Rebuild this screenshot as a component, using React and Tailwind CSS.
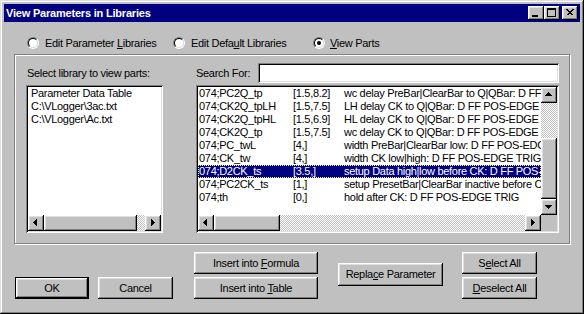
import React from "react";

const raised =
  "shadow-[inset_-1px_-1px_0_#000,inset_1px_1px_0_#fff,inset_-2px_-2px_0_#808080,inset_2px_2px_0_#dfdfdf]";
const sunken =
  "shadow-[inset_1px_1px_0_#808080,inset_-1px_-1px_0_#fff,inset_2px_2px_0_#000,inset_-2px_-2px_0_#dfdfdf]";
const dither =
  "bg-[repeating-conic-gradient(#fff_0_25%,#c0c0c0_0_50%)] bg-[length:2px_2px]";

const parts = [
  ["074;PC2Q_tp", "[1.5,8.2]", "wc delay PreBar|ClearBar to Q|QBar: D FF POS-EDGE TRIG"],
  ["074;CK2Q_tpLH", "[1.5,7.5]", "LH delay CK to Q|QBar: D FF POS-EDGE TRIG"],
  ["074;CK2Q_tpHL", "[1.5,6.9]", "HL delay CK to Q|QBar: D FF POS-EDGE TRIG"],
  ["074;CK2Q_tp", "[1.5,7.5]", "wc delay CK to Q|QBar: D FF POS-EDGE TRIG"],
  ["074;PC_twL", "[4,]", "width PreBar|ClearBar low: D FF POS-EDGE TRIG"],
  ["074;CK_tw", "[4,]", "width CK low|high: D FF POS-EDGE TRIG"],
  ["074;D2CK_ts", "[3.5,]", "setup Data high|low before CK: D FF POS-EDGE TRIG"],
  ["074;PC2CK_ts", "[1,]", "setup PresetBar|ClearBar inactive before CK: D FF POS-EDGE TRIG"],
  ["074;th", "[0,]", "hold after CK: D FF POS-EDGE TRIG"],
];

const libraries = ["Parameter Data Table", "C:\\VLogger\\3ac.txt", "C:\\VLogger\\Ac.txt"];

// little black triangle inside a 16x16 scroll button
function Arrow({ dir }) {
  const sizes = [1, 3, 5, 7];
  let rects = [];
  if (dir === "left") rects = sizes.map((h, i) => [5 + i, 7 - (h - 1) / 2, 1, h]);
  if (dir === "right") rects = [7, 5, 3, 1].map((h, i) => [6 + i, 7 - (h - 1) / 2, 1, h]);
  if (dir === "up") rects = sizes.map((w, i) => [7 - (w - 1) / 2, 5 + i, w, 1]);
  if (dir === "down") rects = [7, 5, 3, 1].map((w, i) => [7 - (w - 1) / 2, 6 + i, w, 1]);
  return (
    <div className={`w-[16px] h-[16px] shrink-0 bg-[#c0c0c0] ${raised}`}>
      <svg width="16" height="16" shapeRendering="crispEdges">
        {rects.map(([x, y, w, h], i) => (
          <rect key={i} x={x} y={y} width={w} height={h} fill="#000" />
        ))}
      </svg>
    </div>
  );
}

function Radio({ checked }) {
  return (
    <div className="w-[12px] h-[12px] rounded-full border border-t-[#808080] border-l-[#808080] border-b-white border-r-white shrink-0">
      <div className="w-full h-full rounded-full border border-t-black border-l-black border-b-[#dfdfdf] border-r-[#dfdfdf] bg-white flex items-center justify-center">
        {checked && <div className="w-[4px] h-[4px] rounded-full bg-black" />}
      </div>
    </div>
  );
}

function Button({ children, className = "", isDefault = false }) {
  return (
    <div
      className={`flex items-center justify-center bg-[#c0c0c0] text-black ${
        isDefault ? "border border-black" : ""
      } ${className}`}
    >
      <div className={`w-full h-full flex items-center justify-center ${raised}`}>{children}</div>
    </div>
  );
}

function TitleButton({ children, className = "" }) {
  return (
    <div className={`w-[16px] h-[14px] bg-[#c0c0c0] ${raised} ${className}`}>
      <svg width="16" height="14" shapeRendering="crispEdges">
        {children}
      </svg>
    </div>
  );
}

export default function App() {
  return (
    <div className="w-[584px] h-[314px] bg-[#c0c0c0] p-[4px] flex flex-col font-['Liberation_Sans',Arial,sans-serif] text-[11px] tracking-[-0.3px] text-black leading-none shadow-[inset_-1px_-1px_0_#000,inset_1px_1px_0_#dfdfdf,inset_-2px_-2px_0_#808080,inset_2px_2px_0_#fff] overflow-hidden">
      {/* title bar */}
      <div className="h-[18px] bg-[#000080] flex items-center pl-[2px] pr-[2px]">
        <span className="text-white font-bold text-[11px] tracking-[-0.2px]">View Parameters in Libraries</span>
        <div className="ml-auto flex items-center">
          <TitleButton>
            <rect x="4" y="9" width="6" height="2" fill="#000" />
          </TitleButton>
          <TitleButton>
            <rect x="3" y="2" width="9" height="2" fill="#000" />
            <rect x="3" y="4" width="1" height="7" fill="#000" />
            <rect x="11" y="4" width="1" height="7" fill="#000" />
            <rect x="3" y="10" width="9" height="1" fill="#000" />
          </TitleButton>
          <TitleButton className="ml-[2px]">
            <path d="M4.5 3.5 L10.5 9.5 M5.5 3.5 L11.5 9.5 M10.5 3.5 L4.5 9.5 M11.5 3.5 L5.5 9.5" stroke="#000" strokeWidth="1" />
          </TitleButton>
        </div>
      </div>

      {/* radio row */}
      <div className="mt-[14px] h-[14px] flex items-center pl-[23px]">
        <div className="w-[146px] flex items-center gap-[6px]">
          <Radio />
          <span>
            Edit Parameter <u>L</u>ibraries
          </span>
        </div>
        <div className="w-[140px] flex items-center gap-[6px]">
          <Radio />
          <span>
            Edit Defa<u>u</u>lt Libraries
          </span>
        </div>
        <div className="flex items-center gap-[5px]">
          <Radio checked />
          <span>
            <u>V</u>iew Parts
          </span>
        </div>
      </div>

      {/* group box */}
      <div className="mt-[4px] ml-[10px] w-[556px] h-[190px] shrink-0 border border-[#808080] shadow-[1px_1px_0_#fff,inset_1px_1px_0_#fff] pl-[11px] pt-[8px] flex gap-[33px]">
        <div className="w-[137px] flex flex-col">
          <div className="h-[20px] flex items-center pl-[1px]">Select library to view parts:</div>
          <div className={`mt-[2px] h-[148px] bg-white p-[2px] flex flex-col ${sunken}`}>
            <div className="flex-1 pl-[3px] pt-0">
              {libraries.map((l) => (
                <div key={l} className="h-[13px] flex items-center whitespace-nowrap">
                  {l}
                </div>
              ))}
            </div>
            <div className="h-[16px] flex">
              <Arrow dir="left" />
              <div className={`w-[93px] h-[16px] bg-[#c0c0c0] ${raised}`} />
              <div className={`flex-1 ${dither}`} />
              <Arrow dir="right" />
            </div>
          </div>
        </div>

        <div className="w-[363px] flex flex-col">
          <div className="h-[20px] flex items-center">
            <span className="w-[62px]">Search For:</span>
            <div className={`flex-1 h-[20px] bg-white ${sunken}`} />
          </div>
          <div className={`mt-[2px] h-[148px] bg-white p-[2px] flex flex-col ${sunken}`}>
            <div className="flex-1 flex min-h-0">
              <div className="flex-1 overflow-hidden">
                {parts.map(([name, range, desc], i) => {
                  const sel = i === 6;
                  return (
                    <div
                      key={name}
                      className={`h-[13px] flex items-center whitespace-nowrap pl-[1px] ${
                        sel ? "bg-[#000080] text-white outline-1 outline-dotted outline-offset-[-1px] outline-[#ffff80]" : ""
                      }`}
                    >
                      <span className="w-[94px] shrink-0">{name}</span>
                      <span className="w-[51px] shrink-0">{range}</span>
                      <span className="shrink-0">{desc}</span>
                    </div>
                  );
                })}
              </div>
              <div className="w-[16px] flex flex-col">
                <Arrow dir="up" />
                <div className={`h-[35px] ${dither}`} />
                <div className={`h-[61px] bg-[#c0c0c0] ${raised}`} />
                <Arrow dir="down" />
              </div>
            </div>
            <div className="h-[16px] flex">
              <Arrow dir="left" />
              <div className={`w-[66px] h-[16px] bg-[#c0c0c0] ${raised}`} />
              <div className={`flex-1 ${dither}`} />
              <Arrow dir="right" />
              <div className="w-[16px] bg-[#c0c0c0]" />
            </div>
          </div>
        </div>
      </div>

      {/* bottom buttons */}
      <div className="mt-[8px] flex items-start pl-[11px]">
        <Button isDefault className="mt-[25px] w-[74px] h-[22px]">
          OK
        </Button>
        <Button className="mt-[25px] ml-[9px] w-[75px] h-[22px]">Cancel</Button>
        <div className="ml-[21px] w-[124px] flex flex-col gap-[3px]">
          <Button className="h-[22px]">
            <span>
              Insert into <u>F</u>ormula
            </span>
          </Button>
          <Button className="h-[22px]">
            <span>
              Insert into <u>T</u>able
            </span>
          </Button>
        </div>
        <Button className="mt-[11px] ml-[20px] w-[105px] h-[23px]">
          <span>
            Repla<u>c</u>e Parameter
          </span>
        </Button>
        <div className="ml-[19px] w-[75px] flex flex-col gap-[3px]">
          <Button className="h-[22px]">
            <span>
              S<u>e</u>lect All
            </span>
          </Button>
          <Button className="h-[22px]">
            <span>
              <u>D</u>eselect All
            </span>
          </Button>
        </div>
      </div>
    </div>
  );
}
